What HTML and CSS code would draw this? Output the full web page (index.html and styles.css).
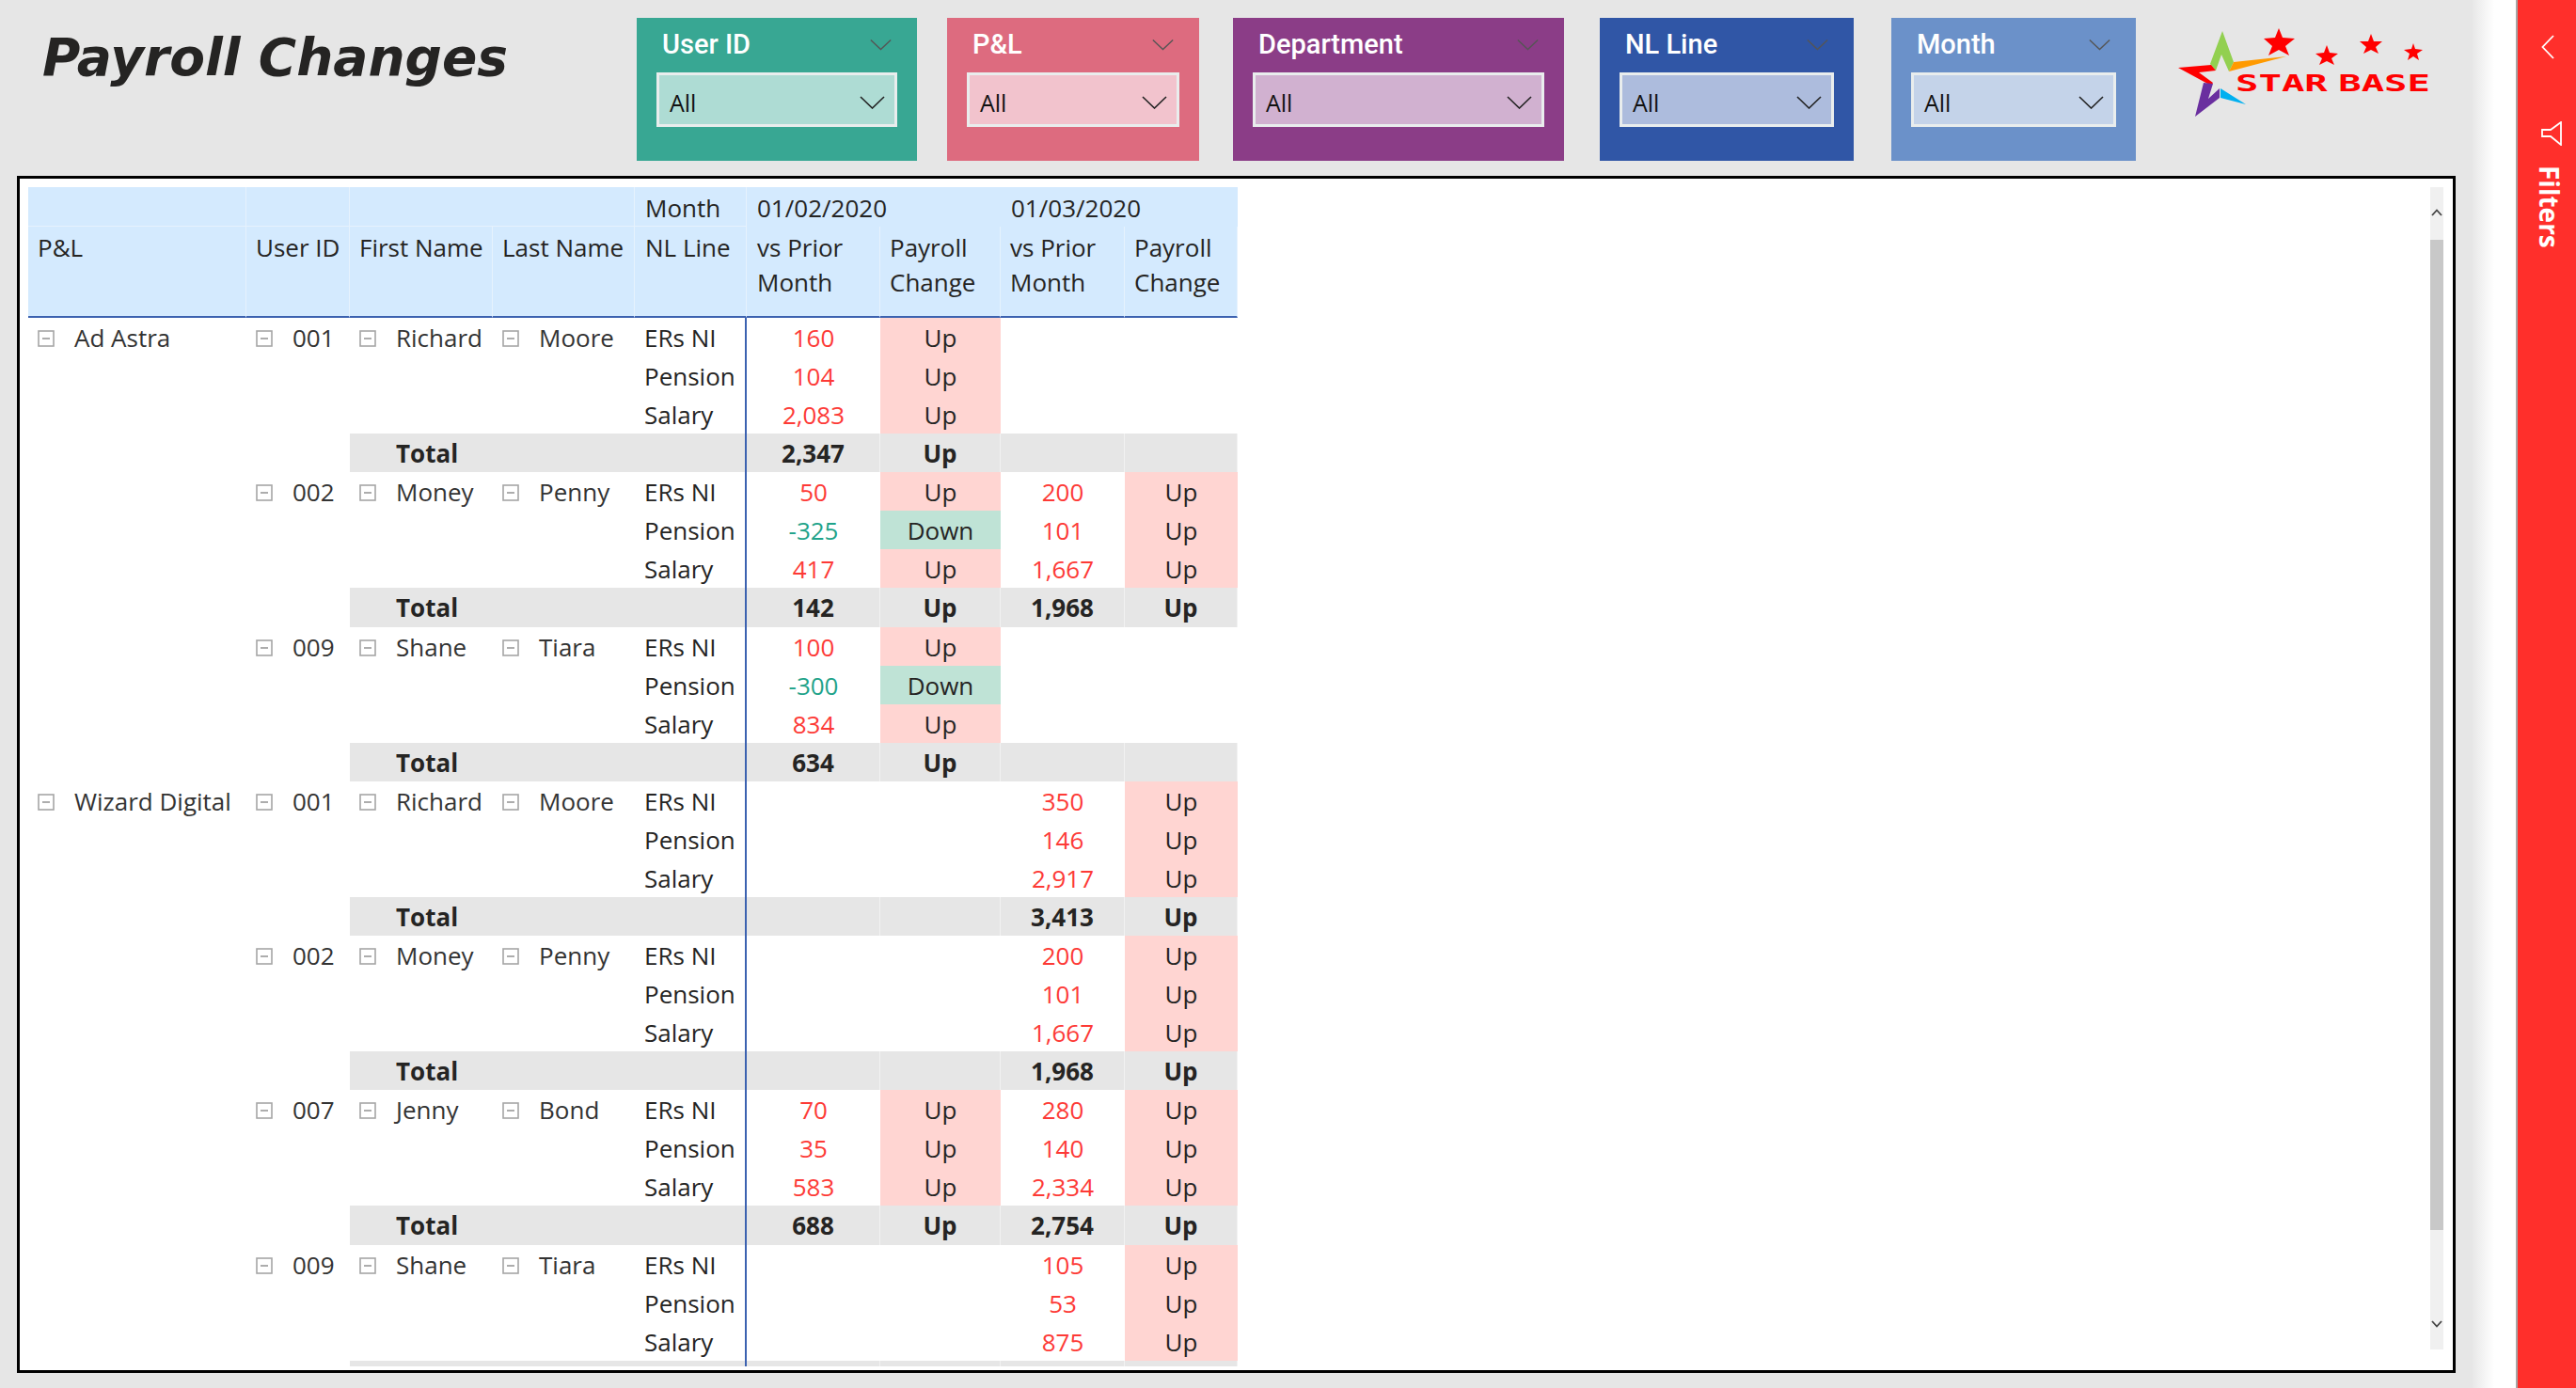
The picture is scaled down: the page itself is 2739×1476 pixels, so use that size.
FILE: index.html
```html
<!DOCTYPE html>
<html lang="en">
  <head>
    <meta charset="UTF-8" />
    <title>Payroll Changes</title>
    <link rel="stylesheet" href="styles.css">
  </head>
  <body>
    <svg class="hidden" width="0" height="0">
      <symbol id="chev" viewBox="0 0 27 14"><polyline points="1,1 13.5,13 26,1" fill="none" stroke="currentColor" stroke-width="1.6" /></symbol>
      <symbol id="minus" viewBox="0 0 18 18"><rect x="1" y="1" width="16" height="16" fill="#fff" stroke="#a6a6a6" stroke-width="1.6" /><line x1="5" y1="9" x2="13" y2="9" stroke="#8a8a8a" stroke-width="1.4" /></symbol>
    </svg>
    <div id="app">
      <div id="report">
        <div id="topBar">
          <h1 class="pageTitle">Payroll Changes</h1>
          <div class="slicer slicerUser">
            <div class="slicerHead"><span>User ID</span><svg class="headChev"><use href="#chev" /></svg></div>
            <div class="dropdown"><span>All</span><svg class="dropChev"><use href="#chev" /></svg></div>
          </div>
          <div class="slicer slicerPl">
            <div class="slicerHead"><span>P&amp;L</span><svg class="headChev"><use href="#chev" /></svg></div>
            <div class="dropdown"><span>All</span><svg class="dropChev"><use href="#chev" /></svg></div>
          </div>
          <div class="slicer slicerDept">
            <div class="slicerHead"><span>Department</span><svg class="headChev"><use href="#chev" /></svg></div>
            <div class="dropdown"><span>All</span><svg class="dropChev"><use href="#chev" /></svg></div>
          </div>
          <div class="slicer slicerLine">
            <div class="slicerHead"><span>NL Line</span><svg class="headChev"><use href="#chev" /></svg></div>
            <div class="dropdown"><span>All</span><svg class="dropChev"><use href="#chev" /></svg></div>
          </div>
          <div class="slicer slicerMonth">
            <div class="slicerHead"><span>Month</span><svg class="headChev"><use href="#chev" /></svg></div>
            <div class="dropdown"><span>All</span><svg class="dropChev"><use href="#chev" /></svg></div>
          </div>
          <svg class="logo" width="290" height="110" viewBox="2305 25 290 110">
            <polygon fill="#92d050" points="2363,33 2375,66 2370,76 2362,58 2356,75 2350,68" />
            <polygon fill="#ff9a00" points="2431,60 2375,66 2370,76" />
            <polygon fill="#ff0000" points="2316,72 2351,69 2356,75 2338,77 2353,88 2351,91" />
            <polygon fill="#6a2f9f" points="2343,88 2353,89 2348,105 2360,94 2360,104 2334,124" />
            <polygon fill="#00b0f0" points="2361,94 2388,111 2361,104" />
            <polygon fill="#ff0000" points="2423,30 2427,40 2440,41 2430,49 2434,59 2423,53 2412,59 2416,49 2407,41 2419,40" />
            <polygon fill="#ff0000" points="2474,48 2477,56 2486,57 2479,62 2482,69 2474,65 2466,69 2469,62 2462,57 2471,56" />
            <polygon fill="#ff0000" points="2521,36 2524,44 2533,44 2526,50 2529,57 2521,53 2513,57 2516,50 2509,44 2518,44" />
            <polygon fill="#ff0000" points="2566,46 2568,52 2576,53 2570,57 2572,64 2566,60 2560,64 2562,57 2556,53 2564,52" />
            <text class="logoText" x="2377" y="97" textLength="207" lengthAdjust="spacingAndGlyphs">STAR BASE</text>
          </svg>
        </div>
        <div id="matrixFrame">
          <div class="matrixView">
            <table class="matrix">
              <colgroup>
                <col class="c1" /><col class="c2" /><col class="c3" /><col class="c4" /><col class="c5" /><col class="c6" /><col class="c7" /><col class="c8" /><col class="c9" />
              </colgroup>
              <thead>
                <tr class="headTop">
                  <th></th><th></th><th class="noLine"></th><th></th><th class="nudge">Month</th>
                  <th colspan="2" class="noLine nudge">01/02/2020</th><th colspan="2" class="noLine nudge">01/03/2020</th>
                </tr>
                <tr class="headMain">
                  <th>P&amp;L</th><th>User ID</th><th>First Name</th><th>Last Name</th><th class="nudge">NL Line</th>
                  <th class="nudge">vs Prior<br />Month</th><th>Payroll<br />Change</th><th>vs Prior<br />Month</th><th>Payroll<br />Change</th>
                </tr>
              </thead>
              <tbody>
                <tr>
                  <td rowspan="12" class="tree"><svg class="box"><use href="#minus" /></svg>Ad Astra</td>
                  <td rowspan="4" class="tree"><svg class="box"><use href="#minus" /></svg>001</td>
                  <td rowspan="3" class="tree"><svg class="box"><use href="#minus" /></svg>Richard</td>
                  <td rowspan="3" class="tree"><svg class="box"><use href="#minus" /></svg>Moore</td>
                  <td class="line">ERs NI</td><td class="num up">160</td><td class="flag rise">Up</td><td></td><td></td>
                </tr>
                <tr><td class="line">Pension</td><td class="num up">104</td><td class="flag rise">Up</td><td></td><td></td></tr>
                <tr><td class="line">Salary</td><td class="num up">2,083</td><td class="flag rise">Up</td><td></td><td></td></tr>
                <tr class="total"><td colspan="3" class="line">Total</td><td class="num">2,347</td><td class="flag">Up</td><td></td><td></td></tr>

                <tr>
                  <td rowspan="4" class="tree"><svg class="box"><use href="#minus" /></svg>002</td>
                  <td rowspan="3" class="tree"><svg class="box"><use href="#minus" /></svg>Money</td>
                  <td rowspan="3" class="tree"><svg class="box"><use href="#minus" /></svg>Penny</td>
                  <td class="line">ERs NI</td><td class="num up">50</td><td class="flag rise">Up</td><td class="num up">200</td><td class="flag rise">Up</td>
                </tr>
                <tr><td class="line">Pension</td><td class="num down">-325</td><td class="flag fall">Down</td><td class="num up">101</td><td class="flag rise">Up</td></tr>
                <tr><td class="line">Salary</td><td class="num up">417</td><td class="flag rise">Up</td><td class="num up">1,667</td><td class="flag rise">Up</td></tr>
                <tr class="total"><td colspan="3" class="line">Total</td><td class="num">142</td><td class="flag">Up</td><td class="num">1,968</td><td class="flag">Up</td></tr>

                <tr>
                  <td rowspan="4" class="tree"><svg class="box"><use href="#minus" /></svg>009</td>
                  <td rowspan="3" class="tree"><svg class="box"><use href="#minus" /></svg>Shane</td>
                  <td rowspan="3" class="tree"><svg class="box"><use href="#minus" /></svg>Tiara</td>
                  <td class="line">ERs NI</td><td class="num up">100</td><td class="flag rise">Up</td><td></td><td></td>
                </tr>
                <tr><td class="line">Pension</td><td class="num down">-300</td><td class="flag fall">Down</td><td></td><td></td></tr>
                <tr><td class="line">Salary</td><td class="num up">834</td><td class="flag rise">Up</td><td></td><td></td></tr>
                <tr class="total"><td colspan="3" class="line">Total</td><td class="num">634</td><td class="flag">Up</td><td></td><td></td></tr>

                <tr>
                  <td rowspan="16" class="tree"><svg class="box"><use href="#minus" /></svg>Wizard Digital</td>
                  <td rowspan="4" class="tree"><svg class="box"><use href="#minus" /></svg>001</td>
                  <td rowspan="3" class="tree"><svg class="box"><use href="#minus" /></svg>Richard</td>
                  <td rowspan="3" class="tree"><svg class="box"><use href="#minus" /></svg>Moore</td>
                  <td class="line">ERs NI</td><td></td><td></td><td class="num up">350</td><td class="flag rise">Up</td>
                </tr>
                <tr><td class="line">Pension</td><td></td><td></td><td class="num up">146</td><td class="flag rise">Up</td></tr>
                <tr><td class="line">Salary</td><td></td><td></td><td class="num up">2,917</td><td class="flag rise">Up</td></tr>
                <tr class="total"><td colspan="3" class="line">Total</td><td></td><td></td><td class="num">3,413</td><td class="flag">Up</td></tr>

                <tr>
                  <td rowspan="4" class="tree"><svg class="box"><use href="#minus" /></svg>002</td>
                  <td rowspan="3" class="tree"><svg class="box"><use href="#minus" /></svg>Money</td>
                  <td rowspan="3" class="tree"><svg class="box"><use href="#minus" /></svg>Penny</td>
                  <td class="line">ERs NI</td><td></td><td></td><td class="num up">200</td><td class="flag rise">Up</td>
                </tr>
                <tr><td class="line">Pension</td><td></td><td></td><td class="num up">101</td><td class="flag rise">Up</td></tr>
                <tr><td class="line">Salary</td><td></td><td></td><td class="num up">1,667</td><td class="flag rise">Up</td></tr>
                <tr class="total"><td colspan="3" class="line">Total</td><td></td><td></td><td class="num">1,968</td><td class="flag">Up</td></tr>

                <tr>
                  <td rowspan="4" class="tree"><svg class="box"><use href="#minus" /></svg>007</td>
                  <td rowspan="3" class="tree"><svg class="box"><use href="#minus" /></svg>Jenny</td>
                  <td rowspan="3" class="tree"><svg class="box"><use href="#minus" /></svg>Bond</td>
                  <td class="line">ERs NI</td><td class="num up">70</td><td class="flag rise">Up</td><td class="num up">280</td><td class="flag rise">Up</td>
                </tr>
                <tr><td class="line">Pension</td><td class="num up">35</td><td class="flag rise">Up</td><td class="num up">140</td><td class="flag rise">Up</td></tr>
                <tr><td class="line">Salary</td><td class="num up">583</td><td class="flag rise">Up</td><td class="num up">2,334</td><td class="flag rise">Up</td></tr>
                <tr class="total"><td colspan="3" class="line">Total</td><td class="num">688</td><td class="flag">Up</td><td class="num">2,754</td><td class="flag">Up</td></tr>

                <tr>
                  <td rowspan="4" class="tree"><svg class="box"><use href="#minus" /></svg>009</td>
                  <td rowspan="3" class="tree"><svg class="box"><use href="#minus" /></svg>Shane</td>
                  <td rowspan="3" class="tree"><svg class="box"><use href="#minus" /></svg>Tiara</td>
                  <td class="line">ERs NI</td><td></td><td></td><td class="num up">105</td><td class="flag rise">Up</td>
                </tr>
                <tr><td class="line">Pension</td><td></td><td></td><td class="num up">53</td><td class="flag rise">Up</td></tr>
                <tr><td class="line">Salary</td><td></td><td></td><td class="num up">875</td><td class="flag rise">Up</td></tr>
                <tr class="total"><td colspan="3" class="line"></td><td></td><td></td><td></td><td></td></tr>
              </tbody>
            </table>
          </div>
          <div class="scrollBar">
            <svg class="scrollUp" width="12" height="8" viewBox="0 0 12 8"><polyline points="1,7 6,1.5 11,7" fill="none" stroke="#444" stroke-width="1.8" /></svg>
            <div class="scrollThumb"></div>
            <svg class="scrollDown" width="12" height="8" viewBox="0 0 12 8"><polyline points="1,1 6,6.5 11,1" fill="none" stroke="#444" stroke-width="1.8" /></svg>
          </div>
        </div>
      </div>
      <div class="paneGap"></div>
      <div id="filtersPane">
        <svg class="paneBack" width="14" height="26" viewBox="0 0 14 26"><polyline points="13,1 1.5,13 13,25" fill="none" stroke="#fff" stroke-width="1.8" /></svg>
        <svg class="paneFunnel" width="22" height="26" viewBox="0 0 22 26"><path d="M21 1 L10 9 H1 V16 H10 L21 25 Z" fill="none" stroke="#fff" stroke-width="1.8" /></svg>
        <div class="paneLabel">Filters</div>
      </div>
    </div>
  </body>
</html>
```

FILE: styles.css
```css
* {
  box-sizing: border-box;
}
html,
body {
  margin: 0;
  height: 100%;
  overflow: hidden;
}
body {
  font-family: "Open Sans", "Liberation Sans", sans-serif;
  font-size: 26px;
  color: #252423;
}
.hidden {
  display: block;
  width: 0;
  height: 0;
}
#app {
  display: flex;
  height: 1476px;
}
#report {
  width: 2629px;
  padding-top: 19px;
  background-color: #e6e6e6;
}
.paneGap {
  width: 46px;
  background: linear-gradient(to right, #e8e8e8, #fff 50%);
}
#filtersPane {
  width: 64px;
  display: flex;
  flex-direction: column;
  align-items: flex-start;
  padding: 37px 0 0 25px;
  background-color: #ff2f2b;
  border-left: 2px solid #a6a6a6;
}
.paneFunnel {
  margin-top: 66px;
}
.paneLabel {
  writing-mode: vertical-rl;
  margin: 21px 0 0 -10px;
  font-size: 28px;
  font-weight: 700;
  color: white;
}

/* top bar */
#topBar {
  display: flex;
  height: 152px;
}
.pageTitle {
  width: 677px;
  margin: 0;
  padding: 10px 0 0 45px;
  font-family: "DejaVu Sans", sans-serif;
  font-size: 55px;
  font-style: italic;
  font-weight: bold;
  color: #252423;
}
.slicer {
  padding: 0 21px;
}
.slicerHead {
  display: flex;
  justify-content: space-between;
  height: 58px;
  padding: 11px 6px 0 6px;
  font-family: Roboto, sans-serif;
  font-size: 29px;
  font-weight: 500;
  color: white;
}
.headChev {
  width: 23px;
  height: 13px;
  margin-top: 11px;
  color: #555;
}
.dropdown {
  display: flex;
  justify-content: space-between;
  height: 58px;
  padding: 12px 10px 0 11px;
  border: 3px solid #e9eded;
  font-size: 25px;
  color: #111;
}
.dropChev {
  width: 27px;
  height: 14px;
  margin-top: 10px;
  color: #222;
}
.slicerUser {
  width: 298px;
  background-color: #38a793;
}
.slicerUser .dropdown {
  background-color: #aedcd4;
}
.slicerPl {
  width: 268px;
  margin-left: 32px;
  background-color: #dd6b7f;
}
.slicerPl .dropdown {
  background-color: #f2c3cd;
}
.slicerDept {
  width: 352px;
  margin-left: 36px;
  background-color: #8b3d87;
}
.slicerDept .dropdown {
  background-color: #d1b1d0;
}
.slicerLine {
  width: 270px;
  margin-left: 38px;
  background-color: #3056a6;
}
.slicerLine .dropdown {
  background-color: #adbcdd;
}
.slicerMonth {
  width: 260px;
  margin-left: 40px;
  background-color: #6b91c9;
}
.slicerMonth .dropdown {
  background-color: #c4d3e9;
}
.logo {
  margin: 6px 0 0 34px;
}
.logoText {
  font-family: "DejaVu Sans Mono", monospace;
  font-size: 25px;
  font-weight: bold;
  word-spacing: -8px;
  fill: #ff0000;
}

/* matrix */
#matrixFrame {
  display: flex;
  justify-content: space-between;
  width: 2593px;
  height: 1273px;
  margin: 16px 0 0 18px;
  padding: 9px 10px 4px 9px;
  border: 3px solid black;
  background-color: white;
}
.matrixView {
  height: 100%;
  overflow: hidden;
}
.matrix {
  width: 1286px;
  table-layout: fixed;
  border-collapse: separate;
  border-spacing: 0;
}
.c1 { width: 232px; }
.c2 { width: 110px; }
.c3 { width: 152px; }
.c4 { width: 151px; }
.c5 { width: 119px; }
.c6 { width: 142px; }
.c7 { width: 128px; }
.c8 { width: 132px; }
.c9 { width: 120px; }
.matrix th {
  padding: 0 0 0 10px;
  font-weight: normal;
  text-align: left;
  vertical-align: top;
  background-color: #d4eafe;
  border-right: 1px solid #e6f2fd;
  white-space: nowrap;
}
.matrix th.noLine {
  border-right: 0;
}
.matrix th.nudge {
  padding-left: 11px;
}
.headTop th {
  height: 41px;
  padding-top: 4px;
  line-height: 37px;
}
.headTop th:nth-child(-n+5) {
  border-bottom: 1px solid #e6f2fd;
}
.headMain th {
  height: 97px;
  padding-top: 4px;
  line-height: 37px;
  border-bottom: 2px solid #3c62b0;
}
.matrix td {
  height: 41.07px;
  padding: 3px 0 0 10px;
  line-height: 37px;
  vertical-align: top;
  white-space: nowrap;
}
.tree {
  color: #333;
}
.box {
  width: 18px;
  height: 18px;
  margin-right: 21px;
  vertical-align: 0;
}
.matrix td.line {
  border-right: 2px solid #3c62b0;
}
.matrix td.num,
.matrix td.flag {
  padding-left: 0;
  text-align: center;
}
.up {
  color: #fd3a36;
}
.down {
  color: #1fa38a;
}
.rise {
  background-color: #ffd5d2;
}
.fall {
  background-color: #bfe3d6;
}
.total td {
  background-color: #e6e6e6;
  font-weight: bold;
  border-right: 1px solid #f2f2f2;
}
.matrix .total td.line {
  padding-left: 49px;
}

/* scroll bar */
.scrollBar {
  display: flex;
  flex-direction: column;
  align-items: center;
  width: 14px;
  height: 1236px;
  background-color: #f0f0f0;
}
.scrollUp {
  margin-top: 23px;
}
.scrollThumb {
  width: 100%;
  height: 1053px;
  margin-top: 25px;
  background-color: #c8c8c8;
}
.scrollDown {
  margin-top: 96px;
}
```
